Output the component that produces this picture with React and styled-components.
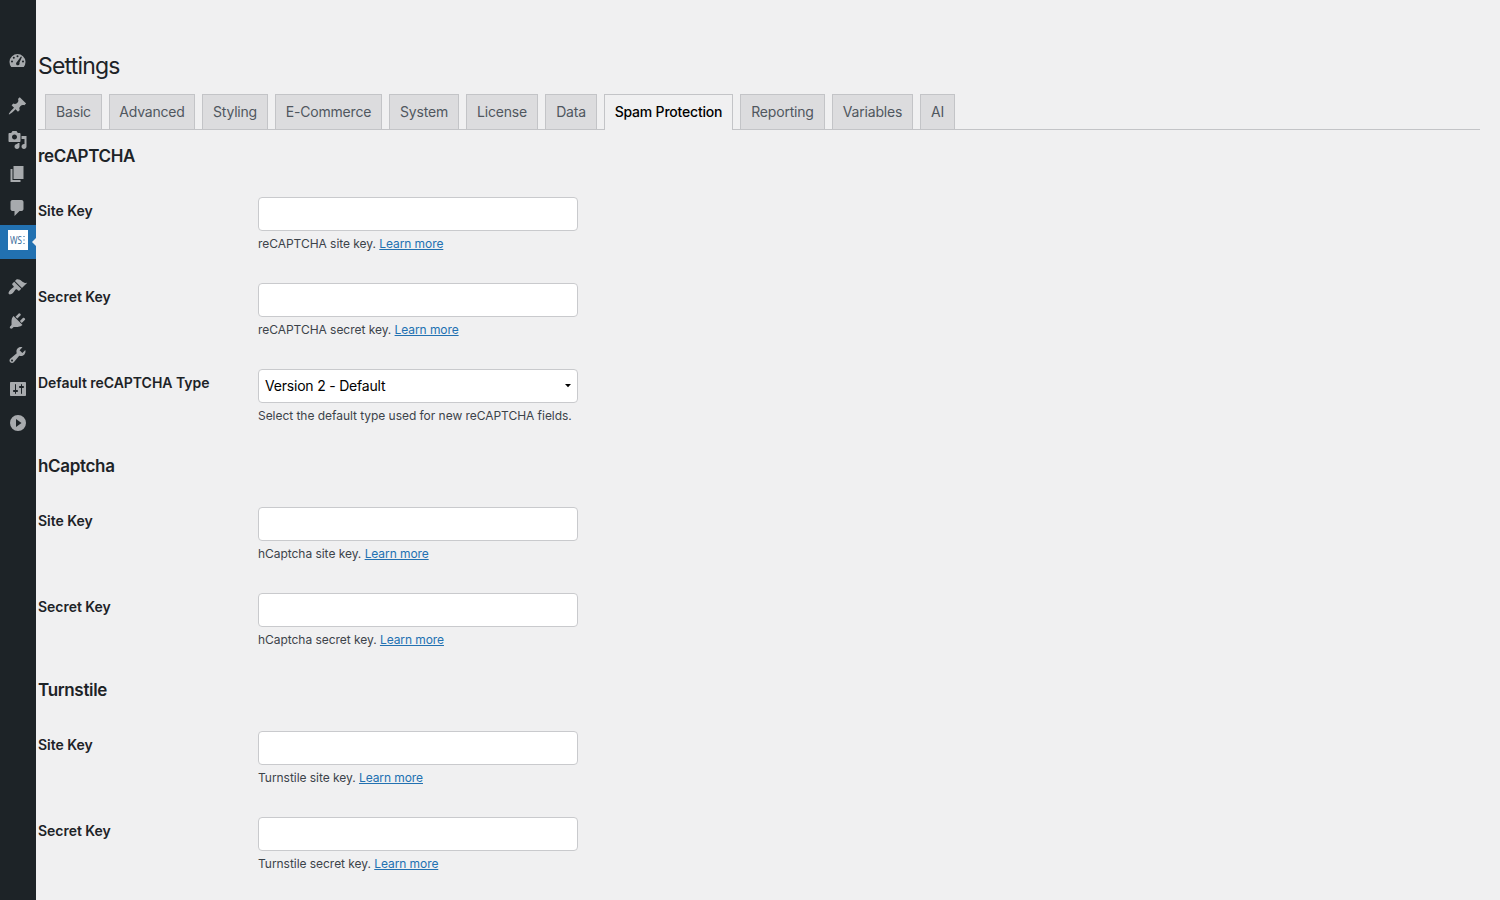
import React from 'react';
import styled, { createGlobalStyle } from 'styled-components';

const icons = {
  dashboard:
    'M3.76 16h12.48A8 8 0 1 0 3.76 16zM10 4.200a1 1 0 1 1 0 2 1 1 0 0 1 0-2zM6.300 5.700a1 1 0 1 1 0 2 1 1 0 0 1 0-2zM13.500 5.600l.9.500-2.500 5.600c.4.9.1 1.900-.7 2.400-.9.500-2 .2-2.400-.7-.5-.9-.2-1.900.6-2.400zM4.500 9.500a1 1 0 1 1 0 2 1 1 0 0 1 0-2zM15.500 9.500a1 1 0 1 1 0 2 1 1 0 0 1 0-2z',
  posts:
    'M10.44 3.02l1.82-1.82 6.36 6.35-1.83 1.82c-1.05-.68-2.48-.57-3.41.36l-.75.75c-.92.93-1.04 2.35-.35 3.41l-1.83 1.82-2.41-2.41-2.8 2.79c-.42.42-3.38 2.71-3.8 2.29s1.86-3.39 2.28-3.81l2.79-2.79L4.1 9.36l1.83-1.82c1.05.69 2.48.57 3.4-.36l.75-.75c.93-.92 1.05-2.35.36-3.41z',
  media:
    'M13 11V4c0-.55-.45-1-1-1h-1.67L9 1H5L3.67 3H2c-.55 0-1 .45-1 1v7c0 .55.45 1 1 1h10c.55 0 1-.45 1-1zM7 4.5c1.38 0 2.5 1.12 2.5 2.5S8.38 9.5 7 9.5 4.5 8.38 4.5 7 5.62 4.5 7 4.5zM14 6h5v10.5c0 1.38-1.12 2.5-2.5 2.5S14 17.88 14 16.5s1.12-2.5 2.5-2.5c.17 0 .34.02.5.05V9h-3V6zm-4 8.05V13h2v3.5c0 1.38-1.12 2.5-2.5 2.5S7 17.88 7 16.5 8.12 14 9.5 14c.17 0 .34.02.5.05z',
  pages: 'M6 15V2h10v13H6zm-1 1h8v2H3V5h2v11z',
  comments:
    'M5 2h9c1.1 0 2 .9 2 2v7c0 1.1-.9 2-2 2h-2l-5 5v-5H5c-1.1 0-2-.9-2-2V4c0-1.1.9-2 2-2z',
  appearance:
    'M14.48 11.06L7.41 3.99l1.5-1.5c.5-.56 2.3-.47 3.51.32 1.21.8 1.43 1.28 2.91 2.1 1.18.64 2.45 1.26 4.45.85zm-.71.71L6.7 4.7 4.93 6.47c-.39.39-.39 1.02 0 1.41l1.06 1.06c.39.39.39 1.03 0 1.42-.6.6-1.43 1.11-2.21 1.69-.35.26-.7.53-1.01.84C1.43 14.23.4 16.08 1.4 17.07c.99 1 2.84-.03 4.18-1.36.31-.31.58-.66.85-1.02.57-.78 1.08-1.61 1.69-2.21.39-.39 1.02-.39 1.41 0l1.06 1.06c.39.39 1.02.39 1.41 0z',
  plugins:
    'M13.11 4.36L9.87 7.6 8 5.73l3.24-3.24c.35-.34 1.05-.2 1.56.32.52.51.66 1.21.31 1.55zm-8 1.77l.91-1.12 9.01 9.01-1.19.84c-.71.71-2.63 1.16-3.82 1.16H6.14L4.9 17.26c-.59.59-1.54.59-2.12 0-.59-.58-.59-1.53 0-2.12l1.24-1.24v-3.88c0-1.13.4-3.19 1.09-3.89zm7.26 3.97l3.24-3.24c.34-.35 1.04-.21 1.55.31.52.51.66 1.21.31 1.55l-3.24 3.25z',
  tools:
    'M16.68 9.77c-1.34 1.34-3.3 1.67-4.95.99l-5.41 6.52c-.99.99-2.59.99-3.58 0s-.99-2.59 0-3.57l6.52-5.42c-.68-1.65-.35-3.61.99-4.95 1.28-1.28 3.12-1.62 4.72-1.06l-2.89 2.89 2.82 2.82 2.86-2.87c.53 1.58.18 3.39-1.08 4.65zM3.81 16.21c.4.39 1.04.39 1.43 0 .4-.4.4-1.04 0-1.43-.39-.4-1.03-.4-1.43 0-.39.39-.39 1.03 0 1.43z',
  settings:
    'M18 16V4c0-.55-.45-1-1-1H3c-.55 0-1 .45-1 1v12c0 .55.45 1 1 1h14c.55 0 1-.45 1-1zM8 11h1c.55 0 1 .45 1 1s-.45 1-1 1H8v1.5c0 .28-.22.5-.5.5s-.5-.22-.5-.5V13H6c-.55 0-1-.45-1-1s.45-1 1-1h1V5.5c0-.28.22-.5.5-.5s.5.22.5.5V11zm5-2h-1c-.55 0-1-.45-1-1s.45-1 1-1h1V5.5c0-.28.22-.5.5-.5s.5.22.5.5V7h1c.55 0 1 .45 1 1s-.45 1-1 1h-1v5.5c0 .28-.22.5-.5.5s-.5-.22-.5-.5V9z',
  collapse: 'M10 2a8 8 0 1 1 0 16 8 8 0 0 1 0-16zM8 14l5.500-4L8 6z',
};

const menuGroups = [
  ['dashboard'],
  ['posts', 'media', 'pages', 'comments', 'wsform'],
  ['appearance', 'plugins', 'tools', 'settings', 'collapse'],
];

const tabs = [
  { label: 'Basic', width: 57 },
  { label: 'Advanced', width: 86 },
  { label: 'Styling', width: 66 },
  { label: 'E-Commerce', width: 107 },
  { label: 'System', width: 70 },
  { label: 'License', width: 72 },
  { label: 'Data', width: 52 },
  { label: 'Spam Protection', width: 129, active: true },
  { label: 'Reporting', width: 85 },
  { label: 'Variables', width: 81 },
  { label: 'AI', width: 35 },
];

const sections = [
  {
    title: 'reCAPTCHA',
    fields: [
      { label: 'Site Key', help: 'reCAPTCHA site key.', link: true },
      { label: 'Secret Key', help: 'reCAPTCHA secret key.', link: true },
      {
        label: 'Default reCAPTCHA Type',
        help: 'Select the default type used for new reCAPTCHA fields.',
        value: 'Version 2 - Default',
      },
    ],
  },
  {
    title: 'hCaptcha',
    fields: [
      { label: 'Site Key', help: 'hCaptcha site key.', link: true },
      { label: 'Secret Key', help: 'hCaptcha secret key.', link: true },
    ],
  },
  {
    title: 'Turnstile',
    fields: [
      { label: 'Site Key', help: 'Turnstile site key.', link: true },
      { label: 'Secret Key', help: 'Turnstile secret key.', link: true },
    ],
  },
];

function MenuItem({ name }) {
  if (name === 'wsform') {
    return (
      <MenuLink $active>
        <Brand>
          <BrandText>WS</BrandText>
          <svg width="3" height="8" viewBox="0 0 3 8" fill="#8aa9c8">
            <path d="M0 0h2v1H0zM0 3.500h2v1H0zM0 7h2v1H0z" />
          </svg>
        </Brand>
      </MenuLink>
    );
  }
  return (
    <MenuLink>
      <MenuIcon viewBox="0 0 20 20" $nudge={name !== 'settings' && name !== 'collapse'}>
        <path d={icons[name]} />
      </MenuIcon>
    </MenuLink>
  );
}

function Field({ field }) {
  return (
    <FieldRow>
      <Label>{field.label}</Label>
      <div>
        {field.value ? (
          <SelectBox>
            {field.value}
            <svg width="6" height="4" viewBox="0 0 6 4">
              <path d="M0 0h6L3 3.300z" />
            </svg>
          </SelectBox>
        ) : (
          <TextInput type="text" />
        )}
        <Help>
          {field.help} {field.link && <HelpLink href="#">Learn more</HelpLink>}
        </Help>
      </div>
    </FieldRow>
  );
}

function App() {
  return (
    <Page>
      <GlobalStyle />
      <Sidebar>
        {menuGroups.map((group) => (
          <MenuGroup key={group[0]}>
            {group.map((name) => (
              <MenuItem key={name} name={name} />
            ))}
          </MenuGroup>
        ))}
      </Sidebar>
      <Content>
        <Heading>Settings</Heading>
        <TabBar>
          {tabs.map((tab) => (
            <Tab key={tab.label} $width={tab.width} $active={tab.active}>
              {tab.label}
            </Tab>
          ))}
        </TabBar>
        {sections.map((section) => (
          <section key={section.title}>
            <SectionTitle>{section.title}</SectionTitle>
            {section.fields.map((field) => (
              <Field key={field.label} field={field} />
            ))}
          </section>
        ))}
      </Content>
    </Page>
  );
}

const GlobalStyle = createGlobalStyle`
  * {
    box-sizing: border-box;
  }
  body {
    margin: 0;
    background: #f0f0f1;
    color: #1d2327;
    font-family: Inter, "Liberation Sans", sans-serif;
    font-size: 14px;
  }
`;

const Page = styled.div`
  display: flex;
  height: 900px;
  overflow: hidden;
`;

const Sidebar = styled.nav`
  display: flex;
  flex-direction: column;
  gap: 11px;
  width: 36px;
  flex-shrink: 0;
  padding-top: 44px;
  background: #1d2327;
`;

const MenuGroup = styled.div`
  display: flex;
  flex-direction: column;
`;

const MenuLink = styled.div`
  position: relative;
  display: flex;
  justify-content: center;
  height: 34px;
  padding-top: ${(p) => (p.$active ? '5px' : '7px')};
  background: ${(p) => (p.$active ? '#2271b1' : 'transparent')};

  /* notch pointing at the open page */
  &::after {
    content: '';
    display: ${(p) => (p.$active ? 'block' : 'none')};
    position: absolute;
    right: 0;
    top: 13px;
    border: 4px solid transparent;
    border-left-width: 0;
    border-right-color: #f0f0f1;
  }
`;

const MenuIcon = styled.svg`
  width: 20px;
  height: 20px;
  fill: #a7aaad;
  fill-rule: evenodd;
  transform: translateX(${(p) => (p.$nudge ? '-0.5px' : '0')});
`;

const Brand = styled.div`
  display: flex;
  align-items: center;
  width: 20px;
  height: 20px;
  padding-left: 2px;
  background: #fff;
`;

const BrandText = styled.span`
  width: 13px;
  font-family: "Open Sans", sans-serif;
  font-size: 10.5px;
  font-weight: 400;
  line-height: 20px;
  color: #2f6496;
  transform: scaleX(0.78);
  transform-origin: left;
`;

const Content = styled.main`
  flex: 1;
  padding: 53px 20px 0 2px;
`;

const Heading = styled.h1`
  margin: 0;
  font-size: 23px;
  font-weight: 400;
  line-height: 27px;
  letter-spacing: -0.8px;
`;

const TabBar = styled.div`
  display: flex;
  gap: 7px;
  height: 36px;
  margin: 14px 0 1px;
  padding-left: 7px;
  border-bottom: 1px solid #c3c4c7;
`;

const Tab = styled.div`
  width: ${(p) => p.$width}px;
  height: ${(p) => (p.$active ? 36 : 35)}px;
  border: 1px solid #c3c4c7;
  border-bottom: none;
  background: ${(p) => (p.$active ? '#f0f0f1' : '#dcdcde')};
  color: ${(p) => (p.$active ? '#000' : '#50575e')};
  font-weight: ${(p) => (p.$active ? 450 : 400)};
  line-height: 33px;
  letter-spacing: -0.2px;
  text-align: center;
  white-space: nowrap;
`;

const SectionTitle = styled.h2`
  margin: 0 0 15px;
  padding-top: 13px;
  font-size: 17px;
  font-weight: 600;
  line-height: 24px;
  letter-spacing: -0.33px;
`;

const FieldRow = styled.div`
  display: grid;
  grid-template-columns: 220px 320px;
  height: 86px;
  padding-top: 14px;
`;

const Label = styled.div`
  padding-top: 5px;
  font-weight: 600;
  line-height: 18px;
  letter-spacing: -0.03px;
`;

const TextInput = styled.input`
  display: block;
  width: 320px;
  height: 34px;
  border: 1px solid #c9cacd;
  border-radius: 4px;
  background: #fff;
`;

const SelectBox = styled.div`
  display: flex;
  align-items: center;
  justify-content: space-between;
  height: 34px;
  padding: 0 6px;
  border: 1px solid #c9cacd;
  border-radius: 4px;
  background: #fff;
  color: #000;
  line-height: 16px;
  letter-spacing: -0.2px;
`;

const Help = styled.p`
  margin: 4px 0 0;
  font-size: 12px;
  line-height: 18px;
  letter-spacing: -0.04px;
  color: #3c434a;
  white-space: nowrap;
`;

const HelpLink = styled.a`
  color: #2271b1;
  letter-spacing: -0.08px;
`;

export default App;
